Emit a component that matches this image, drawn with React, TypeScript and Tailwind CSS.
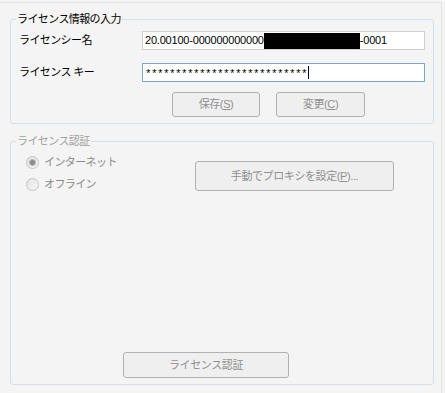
import React from "react";

const GroupBox = ({ title, disabled, className, children }: { title: string; disabled?: boolean; className?: string; children: React.ReactNode }) => (
  <fieldset className={`w-[424px] border border-[#d5dfe5] rounded-[3px] ${className ?? ""}`}>
    <legend className={`ml-[5px] px-[1px] text-[11px] leading-[14px] tracking-[-0.6px] ${disabled ? "text-[#a3a3a3]" : "text-black"}`}>
      {title}
    </legend>
    {children}
  </fieldset>
);

const Button = ({ className, children }: { className?: string; children: React.ReactNode }) => (
  <div
    className={`flex items-center justify-center border border-[#adb2b5] rounded-[3px] bg-[#efefef] text-[11px] tracking-[-0.4px] text-[#8f8f8f] ${className ?? ""}`}
  >
    {children}
  </div>
);

const Radio = ({ checked, label }: { checked?: boolean; label: string }) => (
  <div className="flex items-center h-[22px]">
    <span className="w-[13px] h-[13px] rounded-full border border-[#c3c3c3] bg-gradient-to-br from-[#e4e4e4] to-[#f7f7f7] flex items-center justify-center">
      {checked && <span className="w-[5px] h-[5px] rounded-full bg-[#8c8c8c] ring-1 ring-[#b8b8b8]" />}
    </span>
    <span className="ml-[5px] text-[11px] tracking-[-0.6px] text-[#8a8a8a]">{label}</span>
  </div>
);

export default function App() {
  return (
    <div className="w-[445px] h-[393px] bg-[#f4f4f4] pt-[2px] font-['Liberation_Sans','Noto_Sans_CJK_JP',sans-serif] overflow-hidden">
      <div className="w-[442px] h-[391px] border-t border-r border-[#dfe5ea] px-[10px] pt-[9px]">
        {/* ライセンス情報の入力 */}
        <GroupBox title="ライセンス情報の入力" className="h-[112px]">
          <div className="flex flex-col pl-[8px] pr-[8px] pt-[5px]">
            <div className="flex items-center h-[19px]">
              <span className="w-[123px] text-[11px] tracking-[-0.6px] text-black">ライセンシー名</span>
              <div className="flex items-center w-[283px] h-[19px] bg-white border border-[#ccd0d6] pl-[2px] text-[11px] tracking-[-0.2px] text-black">
                <span>20.00100-000000000000</span>
                <span className="inline-block w-[96px] h-[16px] bg-black" />
                <span>-0001</span>
              </div>
            </div>
            <div className="flex items-center h-[19px] mt-[13px]">
              <span className="w-[123px] text-[11px] tracking-[-0.6px] text-black">ライセンス キー</span>
              <div className="flex items-center w-[283px] h-[19px] bg-white border border-[#7ba5d3] pl-[2px] font-['Liberation_Mono',monospace] text-[11px] tracking-[-0.6px] text-black">
                <span className="mt-[3px]">***************************</span>
                <span className="inline-block w-[1px] h-[13px] bg-black ml-[1px]" />
              </div>
            </div>
            <div className="flex mt-[10px] pl-[153px] gap-[16px]">
              <Button className="w-[88px] h-[25px]">
                保存(<span className="underline">S</span>)
              </Button>
              <Button className="w-[89px] h-[25px]">
                変更(<span className="underline">C</span>)
              </Button>
            </div>
          </div>
        </GroupBox>

        {/* ライセンス認証 */}
        <GroupBox title="ライセンス認証" disabled className="h-[251px] mt-[10px]">
          <div className="flex flex-col h-[237px] pl-[15px] pt-[3px] pb-[7px]">
            <div className="flex">
              <div className="w-[169px] flex flex-col">
                <Radio checked label="インターネット" />
                <Radio label="オフライン" />
              </div>
              <Button className="w-[199px] h-[30px] mt-[10px]">
                手動でプロキシを設定(<span className="underline">P</span>)...
              </Button>
            </div>
            <div className="mt-auto pl-[97px]">
              <Button className="w-[166px] h-[26px]">ライセンス認証</Button>
            </div>
          </div>
        </GroupBox>
      </div>
    </div>
  );
}
